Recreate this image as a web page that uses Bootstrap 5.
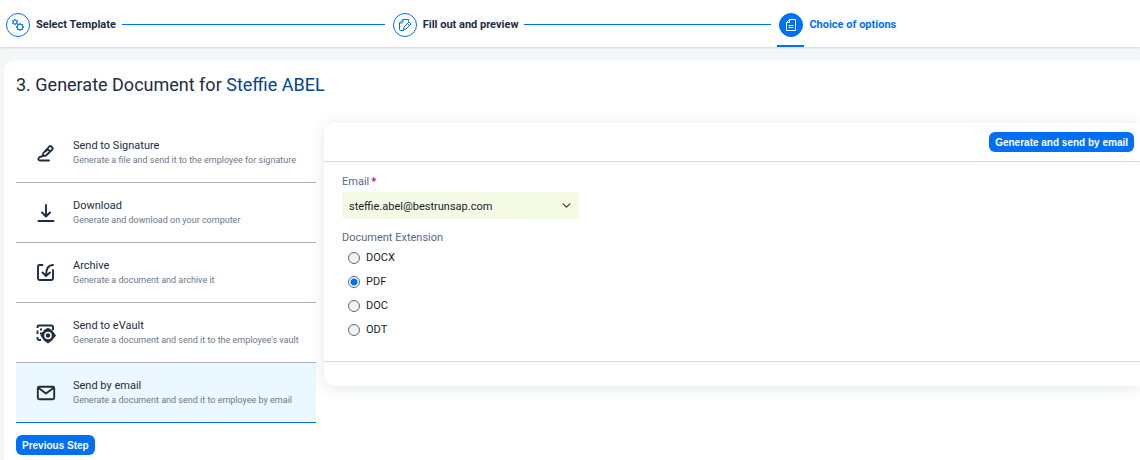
<!DOCTYPE html>
<html lang="en">
<head>
<meta charset="utf-8">
<meta name="viewport" content="width=device-width, initial-scale=1">
<title>Generate Document</title>
<link href="https://cdn.jsdelivr.net/npm/bootstrap@5.3.0/dist/css/bootstrap.min.css" rel="stylesheet">
<style>
  :root { --ink: #1d2d3e; --blue: #0070f2; --label: #556b82; }
  body { font-family: Roboto, "Liberation Sans", sans-serif; font-size: 11px; line-height: 16px; color: var(--ink); background: #f5f6f7; }
  .wizard { height: 47px; padding-left: 6px; box-shadow: 0 1px 2px #0002; }
  .wizard-step { flex: 0 0 34.1%; height: 47px; gap: 6px; padding: 2px 8px 0 0; font-weight: 700; text-decoration: none; color: var(--ink); white-space: nowrap; }
  .wizard-step:last-child { flex: 0 1 auto; color: var(--blue); }
  .step-icon { width: 24px; height: 24px; border: 1px solid var(--blue); border-radius: 50%; color: var(--blue); }
  .wizard-step[aria-current] .step-icon { background: var(--blue); color: #fff; }
  .wizard-step[aria-current]::after { content: ""; position: absolute; left: -2px; bottom: 0; width: 27px; height: 2px; background: var(--blue); }
  .step-line { height: 0; border-top: 1px solid var(--blue); }
  .page-panel { margin: 13px 0 0 4px; padding: 12px 0 5px 12px; border-radius: 12px 0 0 0; }
  .page-title { font-size: 18px; line-height: 26px; margin-bottom: 25px; font-weight: 400; }
  .person { color: #00458c; }
  .side { width: 300px; }
  .choice { height: 60px; gap: 16px; padding-left: 19px; border-bottom: 1px solid #a9b4be; text-decoration: none; color: var(--ink); line-height: 14px; white-space: nowrap; }
  .choice svg { width: 22px; height: 22px; }
  .choice-note { font-size: 9px; color: #6a7889; }
  .choice.active { background: #ebf8ff; border-color: var(--blue); }
  .pane { border-radius: 10px 0 0 10px; box-shadow: 0 2px 16px #2235481f; }
  .pane-head { height: 39px; padding-right: 6px; border-bottom: 1px solid #d9d9d9; }
  .pane-body { padding: 12px 18px 19px; min-height: 199px; }
  .pane-foot { height: 25px; border-top: 1px solid #d9d9d9; }
  .action { height: 20px; padding: 0 6px; border: 0; border-radius: 6px; background: var(--blue); color: #fff; font-family: "Liberation Sans", sans-serif; font-size: 10px; line-height: 19px; font-weight: 700; }
  .previous { margin-top: 12px; }
  .field-label { color: var(--label); }
  legend.field-label { font-size: 11px; line-height: 16px; }
  .required { margin-left: 2px; color: #ba066c; font-weight: 700; }
  .email-select { width: 237px; height: 27px; margin: 2px 0 11px; padding: 2px 24px 0 7px; border: 0; border-radius: 4px; font-size: 11px; line-height: 16px; color: #131e29; background-color: #f5fae5; background-position: right 8px center; background-size: 9px 9px; }
  .extension { height: 24px; gap: 6px; padding-left: 6px; color: #131e29; }
  .extension .form-check-input { width: 12px; height: 12px; margin: 0; border: 1px solid var(--label); background: #f0f1f3; box-shadow: none; }
  .extension .form-check-input:checked { background: radial-gradient(circle, var(--blue) 0 3px, #fff 4px); }
</style>
</head>
<body>
<nav class="wizard d-flex bg-white" aria-label="Steps">
  <a class="wizard-step d-flex align-items-center" href="#template">
    <span class="step-icon d-flex flex-shrink-0 align-items-center justify-content-center">
      <svg width="14" height="14" viewBox="0 0 14 14" fill="none" stroke="currentColor">
        <circle cx="4" cy="4" r="2"/><path d="M4 1v1M4 6v1M1.3 2.5l1 .5M5.7 5l1 .5M1.3 5.5l1-.5M5.7 3l1-.5" stroke-width="1.4"/>
        <circle cx="9" cy="9" r="2.8"/><path d="M9 5v1.2M9 11.8V13M5 9h1.2M11.8 9H13M6.2 6.2l.9.9M10.9 10.9l.9.9M11.8 6.2l-.9.9M7.1 10.9l-.9.9" stroke-width="1.3"/>
      </svg>
    </span>
    <span>Select Template</span><span class="step-line flex-grow-1"></span>
  </a>
  <a class="wizard-step d-flex align-items-center" href="#preview">
    <span class="step-icon d-flex flex-shrink-0 align-items-center justify-content-center">
      <svg width="14" height="14" viewBox="0 0 14 14" fill="none" stroke="currentColor">
        <path d="M6 12.500H2.500a1 1 0 0 1-1-1V5L5 1.500h5.500v2M5 1.500V4a1 1 0 0 1-1 1H1.500"/><path d="M5.500 11.500l.5-2.500 5-5 2 2-5 5zM9.500 5.500l2 2"/>
      </svg>
    </span>
    <span>Fill out and preview</span><span class="step-line flex-grow-1"></span>
  </a>
  <a class="wizard-step d-flex align-items-center position-relative" href="#options" aria-current="step">
    <span class="step-icon d-flex flex-shrink-0 align-items-center justify-content-center">
      <svg width="12" height="12" viewBox="0 0 12 12" fill="none" stroke="currentColor">
        <path d="M4.500.5h6v11h-9v-8zM4.500.5v3h-3M3.500 6.500h5M3.500 8.500h5"/>
      </svg>
    </span>
    <span>Choice of options</span>
  </a>
</nav>
<main class="page-panel bg-white">
  <h1 class="page-title">3. Generate Document for <span class="person">Steffie ABEL</span></h1>
  <div class="d-flex gap-2 align-items-start">
    <nav class="side flex-shrink-0" aria-label="Options">
      <a class="choice d-flex align-items-center" href="#signature">
        <svg viewBox="0 0 22 22" fill="none" stroke="currentColor" stroke-width="1.8" stroke-linejoin="round" stroke-linecap="round"><path d="M7.500 14.200l.8-3.200 6-6.500q1-1 2 0l1 1q1 1 0 2l-6.300 6zM12.500 7l2.600 2.400M10.500 9.500l1.800-1.700M6.500 14.500c-3 .5-4.500 3.500-1.500 4h9"/></svg>
        <span><span class="d-block">Send to Signature</span><span class="choice-note d-block">Generate a file and send it to the employee for signature</span></span>
      </a>
      <a class="choice d-flex align-items-center" href="#download">
        <svg viewBox="0 0 22 22" fill="none" stroke="currentColor" stroke-width="1.900" stroke-linejoin="round" stroke-linecap="round"><path d="M11 3v11M7 10.500l4 4 4-4M3.500 19h15"/></svg>
        <span><span class="d-block">Download</span><span class="choice-note d-block">Generate and download on your computer</span></span>
      </a>
      <a class="choice d-flex align-items-center" href="#archive">
        <svg viewBox="0 0 22 22" fill="none" stroke="currentColor" stroke-width="1.900" stroke-linejoin="round" stroke-linecap="round"><path d="M7.500 3H4.500Q3 3 3 4.500v12Q3 18 4.500 18h12q1.500 0 1.500-1.500V8M18 3q-7 0-7 10.500M7.500 10.500l3.500 3.500 4-3.500"/></svg>
        <span><span class="d-block">Archive</span><span class="choice-note d-block">Generate a document and archive it</span></span>
      </a>
      <a class="choice d-flex align-items-center" href="#evault">
        <svg viewBox="0 0 22 22" fill="none" stroke="currentColor" stroke-width="1.900"><path d="M2.500 6V5Q2.500 3.500 4 3.500h12.500Q18 3.500 18 5v3M2.500 8.500v3.500M2.500 15v1.500Q2.500 18 4 18h2M5 11.500h3M5 7.500h2"/><path d="M9 8l4-2.200L17 8l4 5.500-4 5-4 3-4-3-3.500-5z" fill="currentColor" stroke="none"/><circle cx="13" cy="13.500" r="3" stroke="#fff" stroke-width="1.500"/></svg>
        <span><span class="d-block">Send to eVault</span><span class="choice-note d-block">Generate a document and send it to the employee's vault</span></span>
      </a>
      <a class="choice active d-flex align-items-center" href="#email" aria-current="true">
        <svg viewBox="0 0 22 22" fill="none" stroke="currentColor" stroke-width="1.900" stroke-linejoin="round" stroke-linecap="round"><rect x="2.800" y="4.800" width="16.400" height="12.400" rx="1.500"/><path d="M3.500 6l7.500 5.500L18.500 6"/></svg>
        <span><span class="d-block">Send by email</span><span class="choice-note d-block">Generate a document and send it to employee by email</span></span>
      </a>
    </nav>
    <form class="pane flex-grow-1 bg-white">
      <div class="pane-head d-flex align-items-center justify-content-end">
        <button type="button" class="action">Generate and send by email</button>
      </div>
      <div class="pane-body">
        <label class="field-label d-block" for="email">Email<span class="required">*</span></label>
        <select class="email-select form-select" id="email"><option>steffie.abel@bestrunsap.com</option></select>
        <fieldset>
          <legend class="field-label mb-0">Document Extension</legend>
          <div class="extension d-flex align-items-center"><input class="form-check-input" type="radio" name="ext" id="docx"><label for="docx">DOCX</label></div>
          <div class="extension d-flex align-items-center"><input class="form-check-input" type="radio" name="ext" id="pdf" checked><label for="pdf">PDF</label></div>
          <div class="extension d-flex align-items-center"><input class="form-check-input" type="radio" name="ext" id="doc"><label for="doc">DOC</label></div>
          <div class="extension d-flex align-items-center"><input class="form-check-input" type="radio" name="ext" id="odt"><label for="odt">ODT</label></div>
        </fieldset>
      </div>
      <div class="pane-foot"></div>
    </form>
  </div>
  <button type="button" class="action previous d-block">Previous Step</button>
</main>
<script src="https://cdn.jsdelivr.net/npm/bootstrap@5.3.0/dist/js/bootstrap.bundle.min.js"></script>
</body>
</html>
